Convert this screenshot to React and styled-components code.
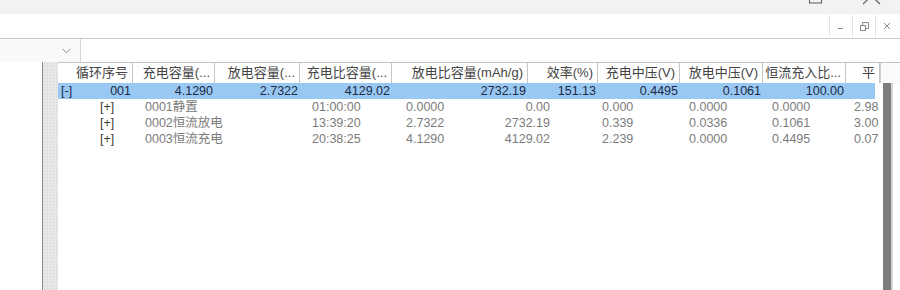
import React from "react";
import styled, { createGlobalStyle } from "styled-components";

const GlobalStyle = createGlobalStyle`
  body {
    margin: 0;
    background: #ffffff;
    font-family: "Liberation Sans", "Noto Sans CJK SC", sans-serif;
    overflow: hidden;
  }
`;

const columns = [
  { title: "循环序号", width: 75 },
  { title: "充电容量(...", width: 82 },
  { title: "放电容量(...", width: 85 },
  { title: "充电比容量(...", width: 92 },
  { title: "放电比容量(mAh/g)", width: 136 },
  { title: "效率(%)", width: 70 },
  { title: "充电中压(V)", width: 82 },
  { title: "放电中压(V)", width: 83 },
  { title: "恒流充入比...", width: 83 },
  { title: "平", width: 34 },
];

const cycle = ["4.1290", "2.7322", "4129.02", "2732.19", "151.13", "0.4495", "0.1061", "100.00", ""];

const steps = [
  ["0001静置", "01:00:00", "0.0000", "0.00", "0.000", "0.0000", "0.0000", "2.98"],
  ["0002恒流放电", "13:39:20", "2.7322", "2732.19", "0.339", "0.0336", "0.1061", "3.00"],
  ["0003恒流充电", "20:38:25", "4.1290", "4129.02", "2.239", "0.0000", "0.4495", "0.07"],
];

const template = columns.map((c) => c.width + "px").join(" ");

const Screen = styled.div`
  width: 900px;
  height: 290px;
  display: flex;
  flex-direction: column;
  overflow: hidden;
`;

const TitleStrip = styled.div`
  height: 14px;
  background: #f2f2f2;
  display: flex;
  justify-content: flex-end;
  gap: 40px;
  padding-right: 17px;
`;

const MdiBar = styled.div`
  height: 24px;
  border-bottom: 1px solid #c9c9c9;
  display: flex;
  justify-content: flex-end;
  align-items: center;
  padding-right: 2px;
`;

const MdiButton = styled.div`
  width: 22px;
  height: 22px;
  border-left: 1px solid #e2e2e2;
  display: flex;
  align-items: center;
  justify-content: center;
  color: #8a8a8a;
`;

const ComboRow = styled.div`
  height: 23px;
  display: flex;
`;

const Combo = styled.div`
  width: 81px;
  background: #f9f9f9;
  border-right: 1px solid #d6d6d6;
  display: flex;
  align-items: center;
  justify-content: flex-end;
  padding-right: 9px;
  box-sizing: border-box;
`;

const Body = styled.div`
  flex: 1;
  display: flex;
  min-height: 0;
`;

const LeftPanel = styled.div`
  width: 42px;
  background: #ffffff;
`;

const RowStrip = styled.div`
  width: 15px;
  border-left: 1px solid #8a8a8a;
  background-color: #e7e7e7;
  background-image: radial-gradient(#d2d2d2 0.7px, transparent 0.9px);
  background-size: 3px 3px;
`;

const Grid = styled.div`
  width: 822px;
  overflow: hidden;
`;

const HeaderRow = styled.div`
  display: grid;
  grid-template-columns: ${template};
  height: 20px;
  border-top: 1px solid #c2c2c2;
  background: #ffffff;
`;

const HeaderCell = styled.div`
  border-right: 1px solid #c6c6c6;
  text-align: right;
  padding-right: 4px;
  font-size: 13px;
  line-height: 20px;
  color: #444444;
  white-space: nowrap;
  overflow: hidden;
`;

const MasterRow = styled.div`
  display: grid;
  grid-template-columns: ${template};
  height: 16px;
  margin-right: 5px;
  overflow: hidden;
  background: #99c8f3;
  color: #1c2a47;
  font-size: 12.5px;
  line-height: 16px;
`;

const MasterCell = styled.div`
  display: flex;
  justify-content: ${(p) => (p.$split ? "space-between" : "flex-end")};
  padding: 0 2px 0 3px;
  white-space: nowrap;
`;

const StepRow = styled.div`
  display: grid;
  grid-template-columns: 45px 167px 94px 54px 90px 139px 83px 82px 26px;
  padding-left: 42px;
  height: 16px;
  color: #7c7c7c;
  font-size: 12.5px;
  line-height: 16px;
`;

const StepCell = styled.div`
  white-space: nowrap;
  text-align: ${(p) => (p.$right ? "right" : "left")};
  padding-left: ${(p) => p.$pad || 0}px;
`;

const Toggle = styled.span`
  color: #3c3c3c;
`;

const ScrollSide = styled.div`
  flex: 1;
  display: flex;
  flex-direction: column;
`;

const ScrollHead = styled.div`
  height: 20px;
  border-top: 1px solid #c2c2c2;
  border-left: 1px solid #d0d0d0;
  background: #fbfbfb;
`;

const ScrollTrack = styled.div`
  flex: 1;
  display: flex;
  padding-left: 3px;
`;

const Thumb = styled.div`
  width: 8px;
  background: #7d7d7d;
  border-right: 2px solid #d4d4d4;
`;

const Chevron = () => (
  <svg width="9" height="6" viewBox="0 0 9 6">
    <path d="M0.5 0.8 L4.5 4.8 L8.5 0.8" fill="none" stroke="#8c8c8c" strokeWidth="1" />
  </svg>
);

const MaxIcon = () => (
  <svg width="14" height="14" viewBox="0 0 14 14">
    <rect x="0.5" y="-8" width="12" height="11" fill="none" stroke="#555" strokeWidth="1" />
  </svg>
);

const CloseIcon = () => (
  <svg width="20" height="14" viewBox="0 0 20 14">
    <path d="M0 -12 L17 4 M17 -12 L0 4" fill="none" stroke="#555" strokeWidth="1.1" />
  </svg>
);

const MinIcon = () => (
  <svg width="8" height="8" viewBox="0 0 8 8">
    <path d="M1 6.5 L6 6.5" stroke="#8a8a8a" strokeWidth="1" />
  </svg>
);

const RestoreIcon = () => (
  <svg width="9" height="9" viewBox="0 0 9 9">
    <rect x="0.5" y="3.5" width="5" height="5" fill="none" stroke="#8a8a8a" strokeWidth="1" />
    <path d="M2.5 3.5 V0.5 H8.5 V6.5 H5.5" fill="none" stroke="#8a8a8a" strokeWidth="1" />
  </svg>
);

const SmallClose = () => (
  <svg width="8" height="8" viewBox="0 0 8 8">
    <path d="M1 1 L7 7 M7 1 L1 7" stroke="#8a8a8a" strokeWidth="1" />
  </svg>
);

export default function App() {
  return (
    <Screen>
      <GlobalStyle />
      <TitleStrip>
        <MaxIcon />
        <CloseIcon />
      </TitleStrip>
      <MdiBar>
        <MdiButton>
          <MinIcon />
        </MdiButton>
        <MdiButton>
          <RestoreIcon />
        </MdiButton>
        <MdiButton>
          <SmallClose />
        </MdiButton>
      </MdiBar>
      <ComboRow>
        <Combo>
          <Chevron />
        </Combo>
      </ComboRow>
      <Body>
        <LeftPanel />
        <RowStrip />
        <Grid>
          <HeaderRow>
            {columns.map((c) => (
              <HeaderCell key={c.title}>{c.title}</HeaderCell>
            ))}
          </HeaderRow>
          <MasterRow>
            <MasterCell $split>
              <span>[-]</span>
              <span>001</span>
            </MasterCell>
            {cycle.map((v, i) => (
              <MasterCell key={i}>{v}</MasterCell>
            ))}
          </MasterRow>
          {steps.map((s) => (
            <StepRow key={s[0]}>
              <StepCell>
                <Toggle>[+]</Toggle>
              </StepCell>
              <StepCell>{s[0]}</StepCell>
              <StepCell>{s[1]}</StepCell>
              <StepCell>{s[2]}</StepCell>
              <StepCell $right>{s[3]}</StepCell>
              <StepCell $pad={52}>{s[4]}</StepCell>
              <StepCell>{s[5]}</StepCell>
              <StepCell>{s[6]}</StepCell>
              <StepCell>{s[7]}</StepCell>
            </StepRow>
          ))}
        </Grid>
        <ScrollSide>
          <ScrollHead />
          <ScrollTrack>
            <Thumb />
          </ScrollTrack>
        </ScrollSide>
      </Body>
    </Screen>
  );
}
